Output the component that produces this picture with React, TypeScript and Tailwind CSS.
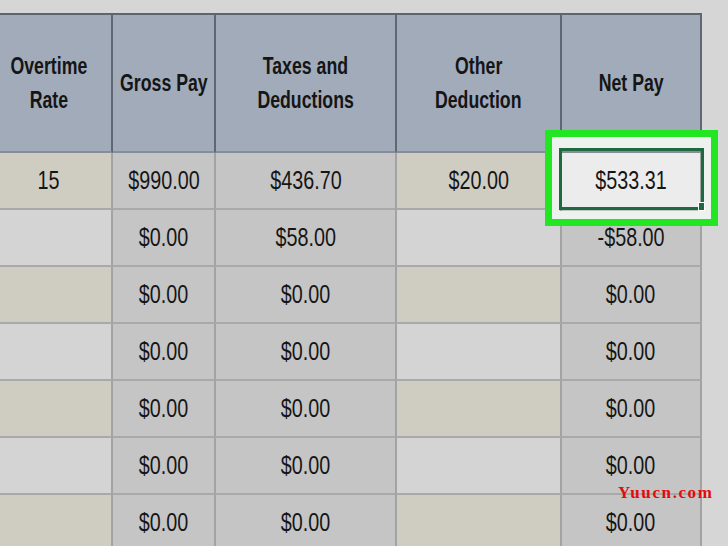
const columns = [
  { title: ['Overtime', 'Rate'], width: 'w-[113px]', pad: 'pr-[14px]', shade: 'alt' },
  { title: ['Gross Pay'], width: 'w-[103px]', pad: '', shade: 'gray' },
  { title: ['Taxes and', 'Deductions'], width: 'w-[181px]', pad: '', shade: 'gray' },
  { title: ['Other', 'Deduction'], width: 'w-[165px]', pad: '', shade: 'alt' },
  { title: ['Net Pay'], width: 'w-[140px]', pad: '', shade: 'gray' },
]

const rows = [
  ['15', '$990.00', '$436.70', '$20.00', '$533.31'],
  ['', '$0.00', '$58.00', '', '-$58.00'],
  ['', '$0.00', '$0.00', '', '$0.00'],
  ['', '$0.00', '$0.00', '', '$0.00'],
  ['', '$0.00', '$0.00', '', '$0.00'],
  ['', '$0.00', '$0.00', '', '$0.00'],
  ['', '$0.00', '$0.00', '', '$0.00'],
]

function cellBg(shade: string, r: number, c: number) {
  if (r === 0 && c === 4) return 'bg-[#ececec]'
  if (shade === 'gray') return 'bg-[#c5c5c5]'
  return r % 2 === 0 ? 'bg-[#cfcdc1]' : 'bg-[#d4d4d4]'
}

export default function App() {
  return (
    <div
      className="relative w-[728px] h-[546px] overflow-hidden bg-[#d6d6d6] text-[#151515]"
      style={{ fontFamily: '"Liberation Sans", Arial, sans-serif' }}
    >
      <div className="h-[13px]" />

      {/* Header */}
      <div className="flex border-t-2 border-[#5d6571] w-[702px]">
        {columns.map((col, i) => (
          <div
            key={i}
            className={`${col.width} ${col.pad} h-[138px] flex flex-col items-center justify-center bg-[#a1abba] border-r-2 border-b-2 border-r-[#5f6773] border-b-[#868d98] text-[23px] font-bold leading-[34px]`}
          >
            {col.title.map((t) => (
              <span key={t} className="inline-block whitespace-nowrap scale-x-[0.77]">
                {t}
              </span>
            ))}
          </div>
        ))}
      </div>

      {/* Body */}
      {rows.map((row, r) => (
        <div key={r} className="flex w-[702px]">
          {row.map((v, c) => (
            <div
              key={c}
              className={`${columns[c].width} ${columns[c].pad} ${cellBg(columns[c].shade, r, c)} h-[57px] flex items-center justify-center border-r-2 border-b-2 border-r-[#a3a3a6] border-b-[#a9a9ab] text-[26px]`}
            >
              <span className="inline-block whitespace-nowrap scale-x-[0.76]">{v}</span>
            </div>
          ))}
        </div>
      ))}

      {/* Selection highlight */}
      <div className="absolute left-[545px] top-[130px] w-[173px] h-[96px] border-[7px] border-[#22e622]">
        <div className="w-full h-full border-l-[7px] border-t-[11px] border-r-[9px] border-b-[8px] border-[#eef2ee]" />
      </div>
      <div className="absolute left-[559px] top-[148px] w-[145px] h-[62px] border-[3px] border-[#1d6a40]" />
      <div className="absolute left-[698px] top-[202px] w-[7px] h-[9px] bg-[#1d6a40] border border-white" />

      {/* Watermark */}
      <div
        className="absolute left-[618px] top-[480px] text-[17px] font-bold tracking-[1.6px] text-[#e30b0b]"
        style={{ fontFamily: '"Liberation Serif", "Times New Roman", serif' }}
      >
        Yuucn.com
      </div>
    </div>
  )
}
